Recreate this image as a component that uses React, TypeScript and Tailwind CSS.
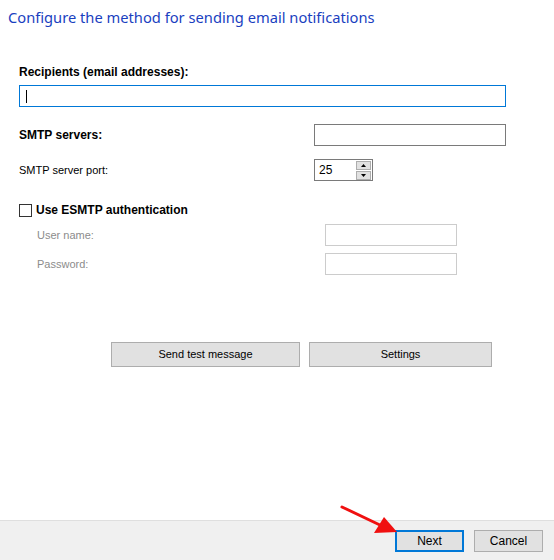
import React from "react";

const ui = "font-['Liberation_Sans',Arial,sans-serif]";

function Spinner() {
  return (
    <div className="flex h-[22px] w-[59px] items-center border border-[#7a7a7a] bg-white pl-[4px] pr-[1px]">
      <span className="flex-1 text-[12px] leading-none text-black">25</span>
      <div className="flex flex-col gap-[1px]">
        <div className="flex h-[9px] w-[15px] items-center justify-center border border-[#adadad] bg-[#e1e1e1]">
          <svg width="5" height="3" viewBox="0 0 5 3"><path d="M2.5 0 L5 3 L0 3 Z" fill="#000" /></svg>
        </div>
        <div className="flex h-[9px] w-[15px] items-center justify-center border border-[#adadad] bg-[#e1e1e1]">
          <svg width="5" height="3" viewBox="0 0 5 3"><path d="M0 0 L5 0 L2.5 3 Z" fill="#000" /></svg>
        </div>
      </div>
    </div>
  );
}

export default function App() {
  return (
    <div className={`relative flex h-[560px] w-[554px] flex-col bg-white ${ui}`}>
      <div className="flex flex-1 flex-col">
        <h1 className="pl-[8px] pt-[7px] font-['Noto_Sans',sans-serif] text-[14.7px] leading-[20px] text-[#1a3fbf]">
          Configure the method for sending email notifications
        </h1>

        <div className="mt-[38px] pl-[19px] text-[12px] font-bold leading-[14px] text-black">
          Recipients (email addresses):
        </div>
        <div className="ml-[19px] mt-[6px] flex h-[22px] w-[487px] items-center border border-[#0078d7] pl-[6px]">
          <div className="h-[13px] w-px bg-black" />
        </div>

        <div className="mt-[17px] flex items-center pl-[19px]">
          <span className="w-[295px] text-[12px] font-bold text-black">SMTP servers:</span>
          <div className="h-[22px] w-[192px] border border-[#7a7a7a]" />
        </div>

        <div className="mt-[13px] flex items-center pl-[19px]">
          <span className="w-[295px] text-[11px] text-black">SMTP server port:</span>
          <Spinner />
        </div>

        <div className="mt-[22px] flex items-center gap-[4px] pl-[19px]">
          <div className="h-[13px] w-[13px] border border-[#333]" />
          <span className="text-[12px] font-bold leading-[14px] text-black">Use ESMTP authentication</span>
        </div>

        <div className="mt-[7px] flex items-center pl-[37px]">
          <span className="w-[288px] text-[11px] text-[#8c8c8c]">User name:</span>
          <div className="h-[22px] w-[132px] border border-[#cccccc]" />
        </div>
        <div className="mt-[7px] flex items-center pl-[37px]">
          <span className="w-[288px] text-[11px] text-[#8c8c8c]">Password:</span>
          <div className="h-[22px] w-[132px] border border-[#cccccc]" />
        </div>

        <div className="mt-[67px] flex gap-[9px] pl-[111px]">
          <button className="h-[25px] w-[189px] border border-[#adadad] bg-[#e1e1e1] text-[11px] text-black">
            Send test message
          </button>
          <button className="h-[25px] w-[183px] border border-[#adadad] bg-[#e1e1e1] text-[11px] text-black">
            Settings
          </button>
        </div>
      </div>

      <div className="flex h-[40px] items-start gap-[10px] border-t border-[#dfdfdf] bg-[#f0f0f0] pl-[395px] pt-[9px]">
        <button className="h-[22px] w-[69px] border-2 border-[#0078d7] bg-[#e1e1e1] text-[12px] text-black">
          Next
        </button>
        <button className="h-[22px] w-[69px] border border-[#adadad] bg-[#e1e1e1] text-[12px] text-black">
          Cancel
        </button>
      </div>

      <svg
        className="pointer-events-none absolute left-0 top-0"
        width="554"
        height="560"
        viewBox="0 0 554 560"
      >
        <line x1="342" y1="507" x2="382" y2="526" stroke="#f01010" strokeWidth="3" strokeLinecap="round" />
        <path d="M397 532 L374 533 L384 517 Z" fill="#f01010" />
      </svg>
    </div>
  );
}
